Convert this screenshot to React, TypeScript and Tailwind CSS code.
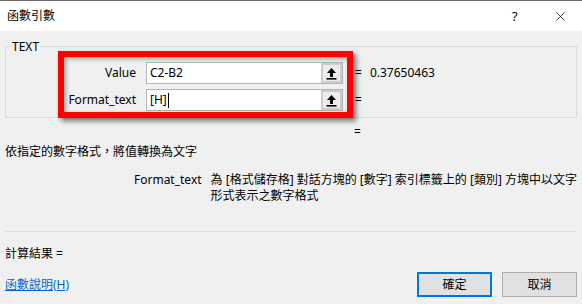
import { X } from "lucide-react";

const font = { fontFamily: '"Noto Sans", "Noto Sans CJK TC", sans-serif' };

function UpArrow() {
  return (
    <svg width="11" height="13" viewBox="0 0 11 13">
      <path d="M5.5 1 L10 6 H7 V10 H4 V6 H1 Z" fill="#000" />
      <rect x="0.5" y="11" width="10" height="1.6" fill="#000" />
    </svg>
  );
}

function RefInput({ value, caret }: { value: string; caret?: boolean }) {
  return (
    <div className="flex h-[22px] w-[197px] border border-[#b4b4b4] bg-white">
      <div className="flex flex-1 items-center pl-[3px] text-[12px] text-black">
        {value}
        {caret && <span className="ml-[1px] h-[15px] w-px bg-black" />}
      </div>
      <span className="grid w-[21px] place-items-center border-2 border-[#cccccc] bg-[#ececec]">
        <UpArrow />
      </span>
    </div>
  );
}

export default function App() {
  return (
    <div className="flex h-[304px] w-[582px] flex-col overflow-hidden bg-[#f0f0f0] text-[12px] leading-[14px] text-black" style={font}>
      <div className="flex h-[31px] shrink-0 items-center border-t border-[#6b6b6b] bg-white pl-[7px]">
        <span className="flex-1">函數引數</span>
        <span className="w-[20px] text-[13px]">?</span>
        <span className="ml-[21px] mr-[14px]"><X size={15} strokeWidth={1.2} /></span>
      </div>

      <div className="relative flex flex-1 flex-col px-[5px]">
        <div className="mt-[15px] flex h-[72px] flex-col border border-[#dcdcdc]">
          <span className="-mt-[7px] ml-[5px] h-[14px] self-start bg-[#f0f0f0] px-[1px]">TEXT</span>
          <div className="mt-[8px] flex items-center">
            <span className="w-[131px] pr-[1px] text-right">Value</span>
            <span className="ml-[9px]"><RefInput value="C2-B2" /></span>
            <span className="ml-[12px]">=</span>
            <span className="ml-[8px]">0.37650463</span>
          </div>
          <div className="mt-[5px] flex items-center">
            <span className="w-[131px] pr-[1px] text-right">Format_text</span>
            <span className="ml-[9px]"><RefInput value="[H]" caret /></span>
            <span className="ml-[12px]">=</span>
          </div>
        </div>

        <div className="mt-[7px] pl-[349px]">=</div>
        <div className="mt-[6px]">依指定的數字格式，將值轉換為文字</div>

        <div className="mt-[13px] flex leading-[16px]">
          <span className="w-[198px] text-right">Format_text</span>
          <span className="ml-[9px] whitespace-nowrap">
            為 [格式儲存格] 對話方塊的 [數字] 索引標籤上的 [類別] 方塊中以文字<br />形式表示之數字格式
          </span>
        </div>

        <div className="mt-[27px] h-px bg-[#dcdcdc]" />
        <div className="mt-[15px]">計算結果 =</div>

        <div className="mt-[11px] flex items-center">
          <a className="flex-1 text-[#0066cc] underline" href="#">函數說明(H)</a>
          <button className="h-[25px] w-[75px] border-2 border-[#0078d7] bg-[#e1e1e1]">確定</button>
          <button className="ml-[10px] h-[25px] w-[75px] border border-[#adadad] bg-[#e1e1e1]">取消</button>
        </div>

        <div className="pointer-events-none absolute left-[58px] top-[20px] h-[67px] w-[295px] border-[6px] border-[#ff0000] shadow-[3px_3px_5px_rgba(0,0,0,0.55),inset_2px_2px_4px_rgba(0,0,0,0.35)]" />
      </div>
    </div>
  );
}
